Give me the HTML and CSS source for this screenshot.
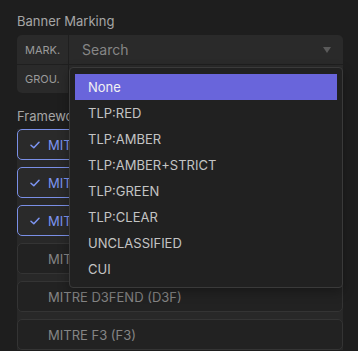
FILE: index.html
```html
<!DOCTYPE html>
<html>
<head>
<meta charset="utf-8">
<link rel="stylesheet" href="styles.css">
</head>
<body>
<div class="panel">
  <div class="section-label">Banner Marking</div>
  <div class="field-group">
    <div class="field-row">
      <div class="field-key">MARK.</div>
      <div class="field-value">
        <span class="placeholder">Search</span>
        <span class="caret"></span>
      </div>
    </div>
    <div class="field-row">
      <div class="field-key">GROU.</div>
      <div class="field-value"></div>
    </div>
    <div class="menu">
      <div class="menu-item active">None</div>
      <div class="menu-item">TLP:RED</div>
      <div class="menu-item">TLP:AMBER</div>
      <div class="menu-item">TLP:AMBER+STRICT</div>
      <div class="menu-item">TLP:GREEN</div>
      <div class="menu-item">TLP:CLEAR</div>
      <div class="menu-item">UNCLASSIFIED</div>
      <div class="menu-item">CUI</div>
    </div>
  </div>

  <div class="section-label frameworks-label">Frameworks</div>
  <div class="card-list">
    <div class="card checked"><span class="check"><svg width="10" height="8" viewBox="0 0 10 8"><path d="M1 4.2 L3.8 6.8 L9 1.2" fill="none" stroke="currentColor" stroke-width="1.5" stroke-linecap="round" stroke-linejoin="round"/></svg></span><span>MITRE ATT&amp;CK (ATT&amp;CK)</span></div>
    <div class="card checked"><span class="check"><svg width="10" height="8" viewBox="0 0 10 8"><path d="M1 4.2 L3.8 6.8 L9 1.2" fill="none" stroke="currentColor" stroke-width="1.5" stroke-linecap="round" stroke-linejoin="round"/></svg></span><span>MITRE ATLAS (ATLAS)</span></div>
    <div class="card checked"><span class="check"><svg width="10" height="8" viewBox="0 0 10 8"><path d="M1 4.2 L3.8 6.8 L9 1.2" fill="none" stroke="currentColor" stroke-width="1.5" stroke-linecap="round" stroke-linejoin="round"/></svg></span><span>MITRE CAPEC (CAPEC)</span></div>
    <div class="card"><span class="check"></span><span>MITRE ENGAGE (ENG)</span></div>
    <div class="card"><span class="check"></span><span>MITRE D3FEND (D3F)</span></div>
    <div class="card"><span class="check"></span><span>MITRE F3 (F3)</span></div>
  </div>
</div>
</body>
</html>
```

FILE: styles.css
```css
* { box-sizing: border-box; }
html, body {
  margin: 0;
  padding: 0;
  background: #1e1e1e;
  height: 351px;
  overflow: hidden;
}
body {
  font-family: Inter, "Noto Sans", sans-serif;
}
.panel {
  margin: 0 15px 0 17px;
  padding-top: 13px;
}
.section-label {
  font-size: 13px;
  line-height: 16px;
  color: #a6a6a6;
  margin-bottom: 6px;
}
.frameworks-label {
  margin-top: 15px;
  margin-bottom: 5px;
}
.field-group {
  position: relative;
  background: #2a2a2a;
  border-radius: 5px;
}
.field-row {
  display: flex;
  height: 29px;
}
.field-row + .field-row {
  border-top: 1px solid #1f1f1f;
}
.field-key {
  width: 52px;
  border-right: 1px solid #1f1f1f;
  display: flex;
  align-items: center;
  padding-left: 8px;
  font-size: 11px;
  color: #9a9a9a;
}
.field-value {
  flex: 1;
  display: flex;
  align-items: center;
  justify-content: space-between;
  padding: 0 12px 0 13px;
}
.placeholder {
  font-size: 14px;
  color: #868686;
}
.caret {
  width: 0;
  height: 0;
  border-left: 4px solid transparent;
  border-right: 4px solid transparent;
  border-top: 6px solid #5a5a5a;
}
.menu {
  position: absolute;
  left: 52px;
  right: 0;
  top: 32px;
  background: #212121;
  border: 1px solid #3a3a3a;
  border-radius: 4px;
  padding: 6px 5px 5px;
  z-index: 5;
  box-shadow: 0 4px 12px rgba(0,0,0,0.3);
}
.menu-item {
  height: 26px;
  line-height: 26px;
  padding-left: 13px;
  font-size: 13px;
  color: #c4c4c4;
}
.menu-item.active {
  background: #6965db;
  color: #f2f2f2;
}
.card-list {
  display: flex;
  flex-direction: column;
  gap: 7px;
  background: #282828;
}
.card {
  height: 31px;
  flex: none;
  display: flex;
  align-items: center;
  padding-left: 12px;
  background: #222222;
  border: 1px solid #343434;
  border-radius: 5px;
  font-size: 13px;
  color: #858585;
}
.card.checked {
  background: #2a2a2a;
  border-color: #7a8fe6;
  color: #7d95f2;
}
.check {
  width: 18px;
  flex: none;
  display: flex;
  align-items: center;
}
```
